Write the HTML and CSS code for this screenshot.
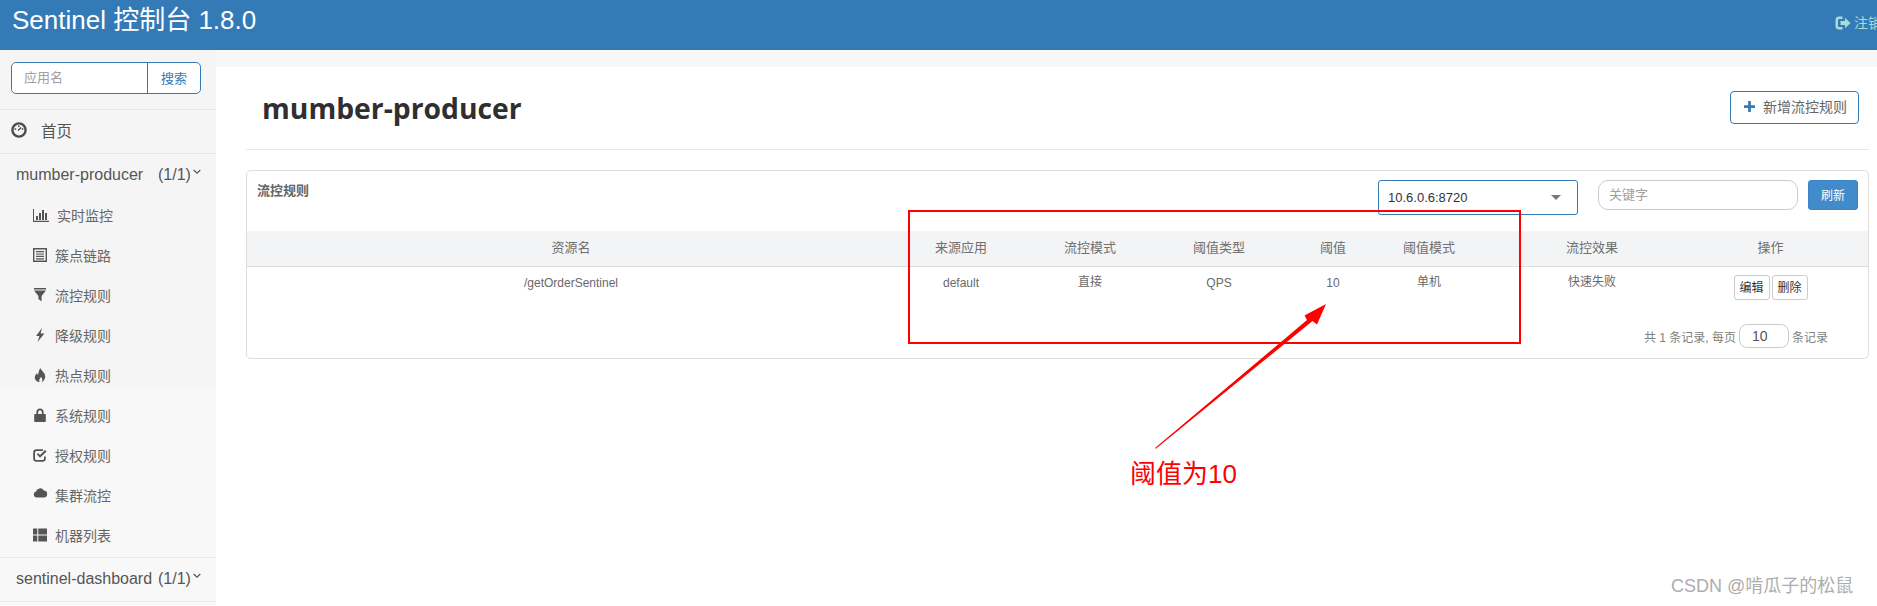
FILE: index.html
```html
<!DOCTYPE html>
<html lang="en">
<head>
    <meta charset="UTF-8">
    <meta name="viewport" content="width=device-width, initial-scale=1.0">
    <title>Sentinel 控制台</title>
    <link rel="stylesheet" href="styles.css">
</head>
<body>
    <div class="header">
        <div class="brand">Sentinel 控制台 1.8.0</div>
        <div class="logout">
            <svg class="logout-icon" viewBox="0 0 16 16"><path d="M7.500 1.500H4a3.500 3.500 0 0 0-3.500 3.500v6A3.500 3.500 0 0 0 4 14.500h3.500v-2.500H4a1 1 0 0 1-1-1V5a1 1 0 0 1 1-1h3.500z"/><path d="M5.500 6H10V2.800L15.500 8 10 13.200V10H5.500z"/></svg>
            <span>注销</span>
        </div>
    </div>
    <div class="layout">
        <div class="sidebar">
            <div class="side-search">
                <div class="search-group">
                    <input type="text" placeholder="应用名"/>
                    <button>搜索</button>
                </div>
            </div>
            <div class="home">
                <svg class="home-icon" viewBox="0 0 16 16"><circle cx="8" cy="8" r="6.600" fill="none" stroke="#4f4a45" stroke-width="2.400"/><path d="M3.600 7h1.600M10.800 7h1.600M7 4.200h1.600M7 8.600l3.200-3" stroke="#4f4a45" stroke-width="1.400" fill="none"/></svg>
                <span>首页</span>
            </div>
            <div class="app-row">
                <span class="app-name">mumber-producer</span>
                <span class="app-count">(1/1)</span>
                <svg class="chev" viewBox="0 0 8 6"><path d="M.7 1l3.300 3.200L7.300 1" fill="none" stroke="#555" stroke-width="1.200"/></svg>
            </div>
            <div class="menu">
                <div class="menu-item">
                    <svg class="wide" viewBox="0 0 16 14"><path d="M0 1h1v11.800h15V14H0z"/><path d="M3 8h2v4H3zM6 5h2v7H6zM9 2h2v10H9zM12 5h2v7h-2z"/></svg>
                    <span>实时监控</span>
                </div>
                <div class="menu-item">
                    <svg viewBox="0 0 14 14"><path fill-rule="evenodd" d="M0 0h14v14H0zM1.400 1.400v11.200h11.200V1.400z"/><path d="M3 3h8v1.200H3zM3 5.400h8v1.200H3zM3 7.800h8V9H3zM3 10.200h8v1.200H3z"/></svg>
                    <span>簇点链路</span>
                </div>
                <div class="menu-item">
                    <svg viewBox="0 0 14 14"><path d="M1 0h12v1.400H1zM1 2.600h12L8.600 8v5.400L5.400 11V8z"/></svg>
                    <span>流控规则</span>
                </div>
                <div class="menu-item">
                    <svg viewBox="0 0 14 14"><path d="M9 0L3 8h3.400L4.600 14 11.400 5.600H7.600z"/></svg>
                    <span>降级规则</span>
                </div>
                <div class="menu-item">
                    <svg viewBox="0 0 14 14"><path d="M7.400 0c.6 2.600 4.800 4.400 4.800 8.600C12.200 11.600 10 14 8.600 14c1.200-1.600 1-3.400-.8-5.200-.2 1.400-1 1.800-1.400 2.600-.4.8-.2 1.800.4 2.600C4 14 1.800 12 1.800 9.400 1.800 7.400 3.200 6.400 4 5c.2 1 .6 1.400 1.200 1.800C5.400 4.400 6 2 7.400 0z"/></svg>
                    <span>热点规则</span>
                </div>
                <div class="menu-item">
                    <svg viewBox="0 0 14 14"><path fill-rule="evenodd" d="M3.400 6V4a3.600 3.600 0 0 1 7.200 0v2h1.400a.8.8 0 0 1 .8.800v6.400a.8.8 0 0 1-.8.800H2a.8.8 0 0 1-.8-.8V6.800A.8.8 0 0 1 2 6zM5.200 6h3.600V4a1.800 1.800 0 0 0-3.600 0z"/></svg>
                    <span>系统规则</span>
                </div>
                <div class="menu-item">
                    <svg viewBox="0 0 14 14"><path d="M11 8.500V10.500a1.500 1.500 0 0 1-1.500 1.500h-6A1.500 1.500 0 0 1 2 10.500v-6A1.500 1.500 0 0 1 3.500 3H10v-1.800H3.500A3.300 3.300 0 0 0 .2 4.500v6a3.300 3.300 0 0 0 3.300 3.300h6a3.300 3.300 0 0 0 3.300-3.300V8.500z"/><path d="M3.800 6.200L5 5l2 2 5-5L13.600 3.400 7 9.800z"/></svg>
                    <span>授权规则</span>
                </div>
                <div class="menu-item">
                    <svg viewBox="0 0 15 12" class="cloud"><path d="M3.500 10.500A3 3 0 0 1 3 4.600 4.200 4.200 0 0 1 10.800 3.600a3.500 3.500 0 0 1 .7 6.900z"/></svg>
                    <span>集群流控</span>
                </div>
                <div class="menu-item">
                    <svg viewBox="0 0 14 13"><path d="M0 0h4.300v6H0zM5.300 0H14v6H5.300zM0 7h4.300v6H0zM5.300 7H14v6H5.300z"/></svg>
                    <span>机器列表</span>
                </div>
            </div>
            <div class="app-row app-row-last">
                <span class="app-name">sentinel-dashboard</span>
                <span class="app-count">(1/1)</span>
                <svg class="chev" viewBox="0 0 8 6"><path d="M.7 1l3.300 3.200L7.300 1" fill="none" stroke="#555" stroke-width="1.200"/></svg>
            </div>
            <div class="side-rest"></div>
        </div>
        <div class="main">
            <div class="content">
                <div class="title-row">
                    <h1>mumber-producer</h1>
                    <button class="add-btn">
                        <svg viewBox="0 0 12 12"><path d="M4.500 0h3v4.500H12v3H7.500V12h-3V7.500H0v-3h4.500z"/></svg>
                        <span>新增流控规则</span>
                    </button>
                </div>
                <div class="panel">
                    <div class="panel-head">
                        <div class="panel-title">流控规则</div>
                        <div class="select-box">
                            <span>10.6.0.6:8720</span>
                            <i class="caret"></i>
                        </div>
                        <input class="keyword" type="text" placeholder="关键字"/>
                        <button class="refresh">刷新</button>
                    </div>
                    <table class="rules">
                        <colgroup>
                            <col class="c1"><col class="c2"><col class="c3"><col class="c4">
                            <col class="c5"><col class="c6"><col class="c7"><col class="c8">
                        </colgroup>
                        <thead>
                            <tr>
                                <th>资源名</th><th>来源应用</th><th>流控模式</th><th>阈值类型</th>
                                <th>阈值</th><th>阈值模式</th><th>流控效果</th><th class="ops">操作</th>
                            </tr>
                        </thead>
                        <tbody>
                            <tr>
                                <td>/getOrderSentinel</td><td>default</td><td>直接</td><td>QPS</td>
                                <td>10</td><td>单机</td><td>快速失败</td>
                                <td class="ops"><button class="mini">编辑</button><button class="mini">删除</button></td>
                            </tr>
                        </tbody>
                    </table>
                    <div class="pager">
                        <span>共 1 条记录, 每页</span>
                        <input type="text" value="10"/>
                        <span>条记录</span>
                    </div>
                </div>
            </div>
        </div>
    </div>

    <!-- screenshot annotations -->
    <div class="mark-box"></div>
    <svg class="mark-arrow" viewBox="0 0 180 155"><path d="M4 150L156 22l-2.500-4.500L175 6l-9 20.500-4.500-3.500L4.800 150.800z" fill="#f00"/></svg>
    <div class="mark-text">阈值为10</div>
    <div class="watermark">CSDN @啃瓜子的松鼠</div>
</body>
</html>
```

FILE: styles.css
```css
*{
    box-sizing: border-box;
}
html,body{
    height: 100%;
}
body{
    margin: 0;
    height: 100vh;
    overflow: hidden;
    position: relative;
    background-color: #fff;
    font-family: "Liberation Sans", "Noto Sans CJK SC", sans-serif;
    font-size: 13px;
    color: #676a6c;
}
button,input{
    font-family: inherit;
}

/* top bar */
.header{
    height: 50px;
    background-color: #337ab7;
    display: flex;
    justify-content: space-between;
    overflow: hidden;
    padding-left: 12px;
}
.brand{
    color: #fff;
    font-size: 26px;
    line-height: 40px;
}
.logout{
    display: flex;
    align-items: center;
    gap: 3px;
    height: 44px;
    margin-right: -5px;
    color: #a9dcd3;
    font-size: 14px;
}
.logout-icon{
    width: 16px;
    height: 16px;
    fill: #a9dcd3;
    margin-top: 2px;
}

.layout{
    display: flex;
    height: 556px;
}

/* left menu */
.sidebar{
    width: 216px;
    background: linear-gradient(#f5f5f5 337px, #f8f8f8 337px);
    display: flex;
    flex-direction: column;
    flex-shrink: 0;
}
.side-search{
    height: 60px;
    padding: 12px 15px 0 11px;
    border-bottom: 1px solid #e7e7e7;
}
.search-group{
    display: flex;
    height: 32px;
    width: 190px;
    border: 1px solid #337ab7;
    border-radius: 5px;
    background-color: #fff;
}
.search-group input{
    width: 136px;
    border: none;
    border-right: 1px solid #337ab7;
    border-radius: 5px 0 0 5px;
    padding: 0 12px 2px;
    font-size: 13px;
    outline: none;
}
.search-group button{
    flex: 1;
    border: none;
    background: none;
    color: #337ab7;
    font-size: 13px;
    padding: 0 0 1px;
}
input::placeholder{
    color: #a0a0a0;
}
.home{
    height: 44px;
    padding: 0 0 4px 11px;
    display: flex;
    align-items: center;
    gap: 14px;
    border-bottom: 1px solid #e7e7e7;
    color: #555;
    font-size: 15.5px;
}
.home-icon{
    width: 16px;
    height: 16px;
}
.app-row{
    height: 43px;
    padding: 0 0 2px 16px;
    display: flex;
    align-items: center;
    color: #555;
    font-size: 16px;
}
.app-name{
    width: 142px;
    white-space: nowrap;
}
.app-count{
    width: 35px;
}
.chev{
    width: 8px;
    height: 6px;
    margin-bottom: 5px;
}
.menu{
    border-bottom: 1px solid #e7e7e7;
}
.menu-item{
    height: 40px;
    padding: 0 0 4px 33px;
    display: flex;
    align-items: center;
    color: #666;
    font-size: 14px;
}
.menu-item svg{
    width: 14px;
    height: 14px;
    fill: #555;
    margin-right: 8px;
    flex-shrink: 0;
}
.menu-item svg.wide{
    width: 16px;
}
.menu-item svg.cloud{
    width: 15px;
    margin-right: 7px;
    margin-bottom: 5px;
}
.app-row-last{
    height: 44px;
    border-bottom: 1px solid #e7e7e7;
}
.side-rest{
    flex: 1;
}

/* main area */
.main{
    flex: 1;
    background-color: #f7f7f7;
    padding-top: 17px;
}
.content{
    height: 100%;
    background-color: #fff;
    padding-left: 30px;
    padding-right: 8px;
}
.title-row{
    height: 83px;
    display: flex;
    justify-content: space-between;
    align-items: center;
    border-bottom: 1px solid #e7e7e7;
    padding: 0 10px 0 16px;
}
h1{
    margin: 0;
    font-family: "Open Sans", sans-serif;
    font-size: 28.3px;
    font-weight: 700;
    color: #2f2f2f;
}
.add-btn{
    display: flex;
    align-items: center;
    gap: 8px;
    width: 129px;
    height: 33px;
    padding: 0 0 3px 13px;
    margin-bottom: 2px;
    background-color: #fff;
    border: 1px solid #337ab7;
    border-radius: 4px;
    color: #666;
    font-size: 14px;
}
.add-btn svg{
    width: 11px;
    height: 11px;
    fill: #337ab7;
    margin-top: 2px;
}
.panel{
    margin-top: 20px;
    height: 189px;
    border: 1px solid #ddd;
    border-radius: 5px;
    overflow: hidden;
}
.panel-head{
    height: 60px;
    display: flex;
    padding: 9px 0 0 10px;
}
.panel-title{
    width: 1121px;
    font-size: 13px;
    font-weight: bold;
    color: #666;
}
.select-box{
    width: 200px;
    height: 35px;
    border: 1px solid #337ab7;
    border-radius: 3px;
    padding: 0 9px 1px;
    display: flex;
    justify-content: space-between;
    align-items: center;
    color: #333;
    font-size: 13px;
}
.caret{
    width: 0;
    height: 0;
    border-left: 5px solid transparent;
    border-right: 5px solid transparent;
    border-top: 5px solid #777;
    margin-right: 7px;
}
.keyword{
    width: 200px;
    height: 30px;
    margin-left: 20px;
    border: 1px solid #ccc;
    border-radius: 10px;
    padding: 0 10px 2px;
    font-size: 13px;
}
.refresh{
    width: 50px;
    height: 30px;
    margin-left: 10px;
    border: 1px solid #3d85c6;
    border-radius: 3px;
    background-color: #428bca;
    color: #fff;
    font-size: 12px;
    padding: 0 0 2px;
}

/* rules table */
.rules{
    width: 100%;
    table-layout: fixed;
    border-collapse: collapse;
}
.c1{ width: 648px; }
.c2{ width: 132px; }
.c3{ width: 126px; }
.c4{ width: 132px; }
.c5{ width: 96px; }
.c6{ width: 96px; }
.c7{ width: 230px; }
.rules th{
    height: 35px;
    background-color: #f3f4f6;
    border-bottom: 1px solid #ddd;
    font-weight: normal;
    font-size: 13px;
    color: #707070;
    text-align: center;
    padding: 0 0 3px;
}
.rules td{
    height: 34px;
    font-size: 12px;
    color: #676a6c;
    text-align: center;
    vertical-align: top;
    padding: 9px 0 0;
}
.rules td:nth-child(3),.rules td:nth-child(6),.rules td:nth-child(7){
    padding-top: 5px;
}
.rules .ops{
    padding-right: 34px;
}
.rules td.ops{
    padding-top: 8px;
}
.mini{
    width: 36px;
    height: 25px;
    margin: 0 1px;
    padding: 0 0 2px;
    background-color: #fff;
    border: 1px solid #ccc;
    border-radius: 3px;
    color: #333;
    font-size: 12px;
}
.pager{
    display: flex;
    justify-content: flex-end;
    align-items: center;
    gap: 3px;
    padding: 24px 40px 0 0;
    font-size: 12px;
    color: #808080;
}
.pager input{
    width: 50px;
    height: 24px;
    border: 1px solid #ccc;
    border-radius: 8px;
    padding: 0 0 0 12px;
    font-size: 14px;
    color: #555;
}

/* annotations drawn over the screenshot */
.mark-box{
    position: absolute;
    left: 908px;
    top: 210px;
    width: 613px;
    height: 134px;
    border: 2px solid #f00;
}
.mark-arrow{
    position: absolute;
    left: 1151px;
    top: 298px;
    width: 180px;
    height: 155px;
}
.mark-text{
    position: absolute;
    left: 1130px;
    top: 456px;
    font-size: 26px;
    line-height: 36px;
    color: #f00;
}
.watermark{
    position: absolute;
    left: 1671px;
    top: 573px;
    font-size: 18px;
    line-height: 26px;
    color: #adadad;
}
```
